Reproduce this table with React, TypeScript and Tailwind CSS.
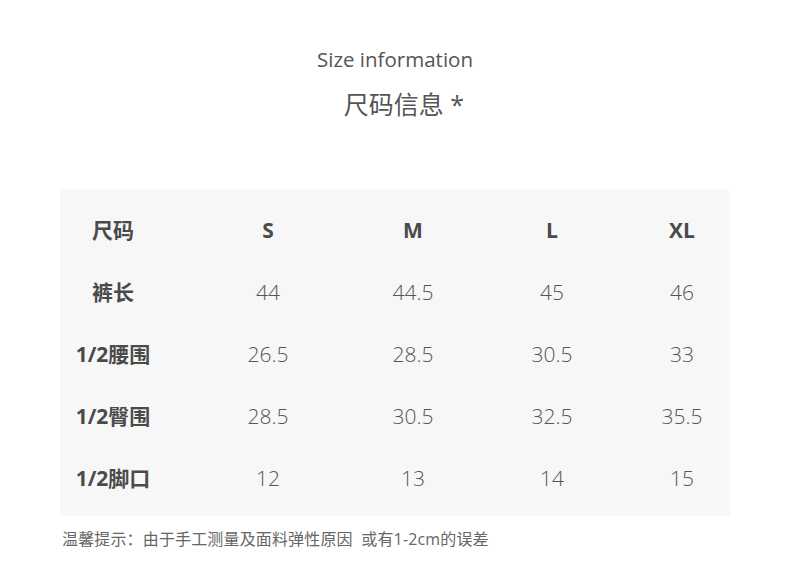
const sizes = ['S', 'M', 'L', 'XL'];

const rows: { label: string; values: string[] }[] = [
  { label: '裤长', values: ['44', '44.5', '45', '46'] },
  { label: '1/2腰围', values: ['26.5', '28.5', '30.5', '33'] },
  { label: '1/2臀围', values: ['28.5', '30.5', '32.5', '35.5'] },
  { label: '1/2脚口', values: ['12', '13', '14', '15'] },
];

export default function App() {
  return (
    <div
      className="w-[790px] h-[587px] bg-white text-[#555] flex flex-col items-center"
      style={{ fontFamily: '"Open Sans", "Noto Sans CJK SC", sans-serif' }}
    >
      <div className="mt-[45px] text-[20.5px] leading-[28px]">Size information</div>
      <div className="mt-[14px] pl-[18px] text-[25px] leading-[34px]">尺码信息 *</div>

      <div className="mt-[68px] w-[670px] bg-[#f7f7f7] rounded-[4px] pt-[11px] pb-[6px]">
        <div className="grid grid-cols-[106px_204px_86px_192px_68px] h-[62px] items-center text-[21px] font-bold text-[#4a4a4a]">
          <div className="text-center">尺码</div>
          {sizes.map((s) => (
            <div key={s} className="text-center">{s}</div>
          ))}
        </div>
        {rows.map((row) => (
          <div
            key={row.label}
            className="grid grid-cols-[106px_204px_86px_192px_68px] h-[62px] items-center"
          >
            <div className="text-center text-[21px] font-bold text-[#4a4a4a]">{row.label}</div>
            {row.values.map((v, i) => (
              <div key={i} className="text-center text-[21px] font-light">{v}</div>
            ))}
          </div>
        ))}
      </div>

      <div className="w-[670px] mt-[11px] text-[16px] tracking-[0.15px] leading-[24px] text-[#666] pl-[2px]">
        温馨提示：由于手工测量及面料弹性原因&nbsp;&nbsp;或有1-2cm的误差
      </div>
    </div>
  );
}
